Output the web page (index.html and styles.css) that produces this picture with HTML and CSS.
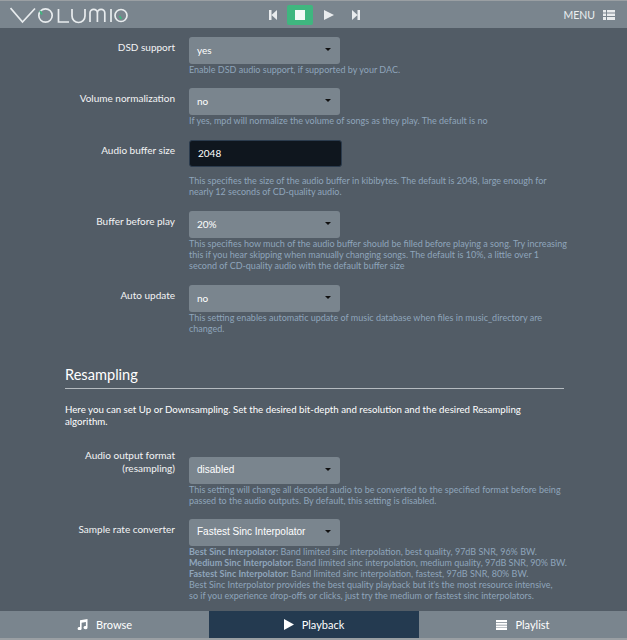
FILE: index.html
```html
<!DOCTYPE html>
<html lang="en">
<head>
<meta charset="utf-8">
<title>Volumio</title>
<link rel="stylesheet" href="styles.css">
</head>
<body>
<header class="topbar">
  <div class="logo"><svg width="120" height="20" viewBox="0 0 120 20" fill="none" stroke="#e8ecee" stroke-width="1.7"><path d="M0.5 3 L12.5 17 L25 3.5"/><circle cx="35.5" cy="10.5" r="6.7"/><path d="M30 6 l2 3.5" stroke="#3fb67f"/><path d="M48.5 4 V17 H59"/><path d="M62 4 V11 a6.5 6.5 0 0 0 13 0 V4"/><path d="M80 17 V8 a3.7 3.7 0 0 1 7.4 0 V17 M87.4 8 a3.7 3.7 0 0 1 7.4 0 V17"/><path d="M101 4 V17"/><circle cx="111" cy="10.5" r="6"/><path d="M109.5 11 l2 3" stroke="#3fb67f"/></svg></div>
  <div class="transport">
    <svg class="tbtn" width="8" height="10" viewBox="0 0 8 10" fill="#e9ecee"><path d="M0 0h2.5v10H0z M8 0v10L2.5 5z"/></svg>
    <div class="stop"><span class="stop-sq"></span></div>
    <svg class="tbtn" width="10" height="10" viewBox="0 0 10 10" fill="#e9ecee"><path d="M0 0l10 5-10 5z"/></svg>
    <svg class="tbtn" width="8" height="10" viewBox="0 0 8 10" fill="#e9ecee"><path d="M0 0l5.5 5L0 10z M5.5 0H8v10H5.5z"/></svg>
  </div>
  <div class="menu">MENU
    <svg width="12" height="10" viewBox="0 0 12 10" fill="#e9ecee"><path d="M0 0h3v2.5H0zM4 0h8v2.5H4zM0 3.5h3V6H0zM4 3.5h8V6H4zM0 7h3v3H0zM4 7h8v3H4z"/></svg>
  </div>
</header>
<main class="content">
  <div class="row row-a">
    <label class="lbl">DSD support</label>
    <div class="ctl">
      <div class="select"><span>yes</span><i class="caret"></i></div>
      <p class="help">Enable DSD audio support, if supported by your DAC.</p>
    </div>
  </div>
  <div class="row row-b">
    <label class="lbl">Volume normalization</label>
    <div class="ctl">
      <div class="select"><span>no</span><i class="caret"></i></div>
      <p class="help">If yes, mpd will normalize the volume of songs as they play. The default is no</p>
    </div>
  </div>
  <div class="row row-c">
    <label class="lbl">Audio buffer size</label>
    <div class="ctl">
      <div class="input">2048</div>
      <p class="help help-gap">This specifies the size of the audio buffer in kibibytes. The default is 2048, large enough for nearly 12 seconds of CD-quality audio.</p>
    </div>
  </div>
  <div class="row row-d">
    <label class="lbl">Buffer before play</label>
    <div class="ctl">
      <div class="select"><span>20%</span><i class="caret"></i></div>
      <p class="help">This specifies how much of the audio buffer should be filled before playing a song. Try increasing this if you hear skipping when manually changing songs. The default is 10%, a little over 1 second of CD-quality audio with the default buffer size</p>
    </div>
  </div>
  <div class="row">
    <label class="lbl">Auto update</label>
    <div class="ctl">
      <div class="select"><span>no</span><i class="caret"></i></div>
      <p class="help">This setting enables automatic update of music database when files in music_directory are changed.</p>
    </div>
  </div>
  <h2 class="section">Resampling</h2>
  <p class="intro">Here you can set Up or Downsampling. Set the desired bit-depth and resolution and the desired Resampling algorithm.</p>
  <div class="row row-e">
    <label class="lbl lbl-high">Audio output format (resampling)</label>
    <div class="ctl">
      <div class="select"><span class="arial">disabled</span><i class="caret"></i></div>
      <p class="help">This setting will change all decoded audio to be converted to the specified format before being passed to the audio outputs. By default, this setting is disabled.</p>
    </div>
  </div>
  <div class="row">
    <label class="lbl">Sample rate converter</label>
    <div class="ctl">
      <div class="select"><span class="arial">Fastest Sinc Interpolator</span><i class="caret"></i></div>
      <p class="help"><b>Best Sinc Interpolator:</b> Band limited sinc interpolation, best quality, 97dB SNR, 96% BW.<br><b>Medium Sinc Interpolator:</b> Band limited sinc interpolation, medium quality, 97dB SNR, 90% BW.<br><b>Fastest Sinc Interpolator:</b> Band limited sinc interpolation, fastest, 97dB SNR, 80% BW.<br>Best Sinc Interpolator provides the best quality playback but it's the most resource intensive,<br>so if you experience drop-offs or clicks, just try the medium or fastest sinc interpolators.</p>
    </div>
  </div>
</main>
<nav class="tabs">
  <a class="tab"><svg width="11" height="11" viewBox="0 0 11 11" fill="#fff"><path d="M3 1.2 L10.5 0 V8.5 a2 1.6 0 1 1-1.6-1.5 V3 L4.6 3.7 V9.5 a2 1.6 0 1 1-1.6-1.5z"/></svg>Browse</a>
  <a class="tab tab-on"><svg width="10" height="11" viewBox="0 0 10 11" fill="#fff"><path d="M0 0l10 5.5L0 11z"/></svg>Playback</a>
  <a class="tab"><svg width="11" height="10" viewBox="0 0 11 10" fill="#fff"><path d="M0 0h11v2H0zM0 2.7h11v2H0zM0 5.4h11v2H0zM0 8h11v2H0z"/></svg>Playlist</a>
</nav>
</body>
</html>
```
FILE: styles.css
```css
* { box-sizing: border-box; }
html, body { margin: 0; height: 640px; overflow: hidden; }
body {
  display: flex;
  flex-direction: column;
  background: #525c66;
  font-family: Lato, "Liberation Sans", sans-serif;
  color: #fff;
  font-size: 10px;
}
.topbar {
  flex: none;
  height: 28px;
  display: grid;
  grid-template-columns: 1fr auto 1fr;
  align-items: center;
  background: #7a858e;
  border-top: 1px solid #9a9fa3;
  padding: 0 12px 0 10px;
}
.logo { display: flex; align-items: center; }
.transport { display: flex; align-items: center; padding-left: 3px; }
.tbtn { display: block; }
.transport .tbtn:first-child { margin-right: 10px; }
.stop {
  width: 26px;
  height: 20px;
  background: #3fb67f;
  border-radius: 2px;
  display: flex;
  align-items: center;
  justify-content: center;
  margin-right: 11px;
}
.stop-sq { width: 10px; height: 10px; background: #f4f8f6; }
.transport .tbtn:last-child { margin-left: 18px; }
.menu {
  justify-self: end;
  display: flex;
  align-items: center;
  gap: 8px;
  font-size: 10.5px;
  color: #eceff1;
}
.content {
  flex: 1;
  min-height: 0;
  overflow: hidden;
  padding: 9px 60px 0 65px;
}
.row {
  display: grid;
  grid-template-columns: 110px 378px;
  column-gap: 14px;
}
.row-a { height: 51px; }
.row-b { height: 52px; }
.row-c { height: 71px; }
.row-d { height: 74px; }
.row-e { height: 62px; }
.lbl {
  text-align: right;
  font-size: 10px;
  line-height: 13px;
  padding-top: 4px;
  color: #f2f4f5;
}
.lbl-high { margin-top: -12px; }
.ctl { min-width: 0; }
.select, .input {
  width: 151px;
  height: 27px;
  border-radius: 3px;
  display: flex;
  align-items: center;
  justify-content: space-between;
  padding: 0 8px 2px;
  font-size: 10px;
  color: #fff;
}
.select { background: #7a858e; }
.arial { font-family: "Liberation Sans", sans-serif; }
.caret {
  width: 0;
  height: 0;
  border-left: 3px solid transparent;
  border-right: 3px solid transparent;
  border-top: 3px solid #111;
  margin-right: 1px;
}
.input { background: #0f161e; border: 1px solid #2b3b4d; width: 153px; }
.help {
  margin: 0;
  font-size: 9px;
  line-height: 11px;
  color: #8fa5bb;
}
.help-gap { padding-top: 8px; }
.section {
  margin: 30px 0 0;
  font-size: 14.6px;
  font-weight: 400;
  line-height: 21px;
  padding-bottom: 3px;
  border-bottom: 1px solid #b5bbc0;
  color: #fff;
  width: 499px;
}
.intro {
  margin: 14px 0 30px;
  font-size: 9.7px;
  line-height: 12px;
  color: #fff;
  width: 499px;
}
.tabs {
  flex: none;
  height: 29px;
  display: grid;
  grid-template-columns: 209px 210px 1fr;
  background: #7a858e;
  border-bottom: 2px solid #9a9fa3;
}
.tab {
  display: flex;
  align-items: center;
  justify-content: center;
  gap: 8px;
  font-size: 11px;
  color: #fff;
}
.tab-on { background: #243a50; }
```
